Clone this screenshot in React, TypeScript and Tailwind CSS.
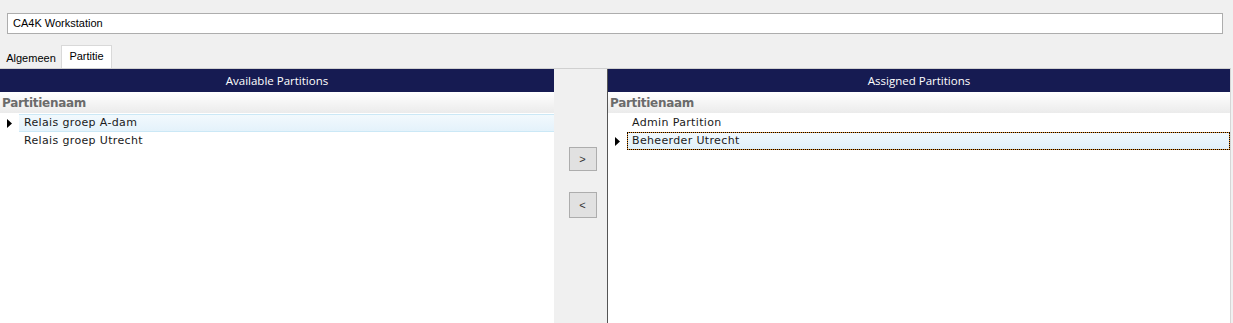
import React from "react";

const Tri = () => (
  <svg width="5" height="9" viewBox="0 0 5 9" className="block">
    <path d="M0 0 L5 4.5 L0 9 Z" fill="#000" />
  </svg>
);

function Panel({
  title,
  rows,
}: {
  title: string;
  rows: { text: string; current?: boolean; selected?: boolean; focus?: boolean }[];
}) {
  return (
    <div className="flex flex-col h-full bg-white">
      <div className="h-[23px] bg-[#161b52] flex items-center justify-center text-white text-[11.5px] font-['Open_Sans',sans-serif]">
        {title}
      </div>
      <div className="h-[21px] bg-gradient-to-b from-[#ffffff] to-[#ebebeb] flex items-center pl-[2px] pt-[1px] text-[12px] font-bold text-[#6b6b6b] font-['DejaVu_Sans',sans-serif] tracking-[-0.3px]">
        Partitienaam
      </div>
      <div className="flex flex-col mt-[1px]">
        {rows.map((r, i) => (
          <div key={i} className="flex h-[18px]">
            <div className="w-[19px] flex items-center justify-center">
              {r.current ? <Tri /> : null}
            </div>
            {r.focus ? (
              <div className="flex-1 bg-[#e8922e] flex">
                <div className="flex-1 flex items-center pl-[4px] text-[11px] tracking-[0.35px] text-[#1a1a1a] font-['DejaVu_Sans',sans-serif] border border-dotted border-black bg-clip-padding bg-gradient-to-b from-[#f0f8fd] to-[#e0f0fa]">
                  {r.text}
                </div>
              </div>
            ) : (
              <div
                className={`flex-1 flex items-center pl-[5px] text-[11px] tracking-[0.35px] text-[#1a1a1a] font-['DejaVu_Sans',sans-serif] ${
                  r.selected
                    ? "bg-gradient-to-b from-[#f2f9fd] to-[#e4f2fb] border-y border-[#cbe8f6]"
                    : ""
                }`}
              >
                {r.text}
              </div>
            )}
          </div>
        ))}
      </div>
    </div>
  );
}

export default function App() {
  return (
    <div className="w-[1233px] h-[323px] bg-[#f0f0f0] overflow-hidden flex flex-col">
      <div className="pt-[13px] pl-[7px]">
        <div className="w-[1216px] h-[21px] bg-white border border-[#adadad] flex items-center pl-[5px] text-[11px] text-black font-['Liberation_Sans',sans-serif]">
          CA4K Workstation
        </div>
      </div>
      <div className="mt-[11px] h-[23px] flex items-end font-['Liberation_Sans',sans-serif] text-[11px] text-black">
        <div className="w-[61px] h-[20px] flex items-center justify-center pt-[1px] pl-[1px]">Algemeen</div>
        <div className="w-[51px] h-[23px] bg-white border border-b-0 border-[#d9d9d9] flex items-center justify-center pb-[1px]">
          Partitie
        </div>
      </div>
      <div className="flex-1 flex border-t border-[#d0d0d0] w-[1231px]">
        <div className="w-[554px] h-full">
          <Panel
            title="Available Partitions"
            rows={[
              { text: "Relais groep A-dam", current: true, selected: true },
              { text: "Relais groep Utrecht" },
            ]}
          />
        </div>
        <div className="w-[53px] h-full flex flex-col items-center pt-[78px]">
          <button className="w-[28px] h-[24px] bg-[#e1e1e1] border border-[#adadad] text-[11px] text-[#333] flex items-center justify-center font-['Liberation_Sans',sans-serif] ml-[4px]">
            &gt;
          </button>
          <button className="mt-[21px] w-[28px] h-[26px] bg-[#e1e1e1] border border-[#adadad] text-[11px] text-[#333] flex items-center justify-center font-['Liberation_Sans',sans-serif] ml-[4px]">
            &lt;
          </button>
        </div>
        <div className="flex-1 h-full border-l border-[#555555] border-r border-r-[#d6d6d6]">
          <Panel
            title="Assigned Partitions"
            rows={[
              { text: "Admin Partition" },
              { text: "Beheerder Utrecht", current: true, focus: true },
            ]}
          />
        </div>
      </div>
    </div>
  );
}
